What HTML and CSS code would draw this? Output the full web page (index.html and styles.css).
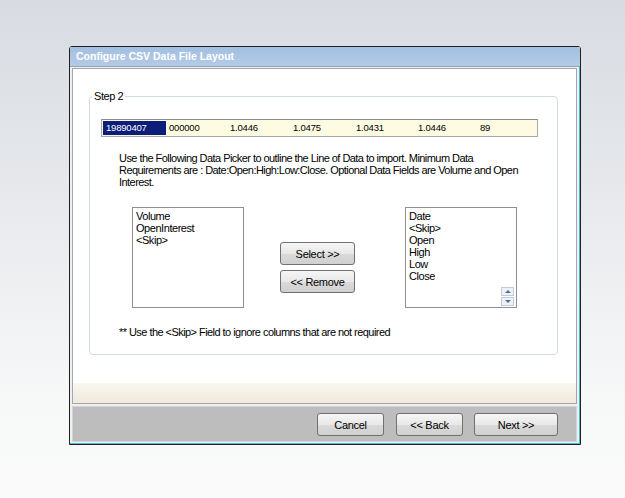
FILE: index.html
```html
<!DOCTYPE html>
<html lang="en">

<head>
  <meta charset="UTF-8">
  <meta name="viewport" content="width=device-width, initial-scale=1.0">
  <title>Configure CSV Data File Layout</title>
  <link rel="stylesheet" href="styles.css">
</head>

<body>
  <div class="window">
    <div class="titlebar">Configure CSV Data File Layout</div>
    <div class="frame">
      <div class="panel">
        <fieldset class="step">
          <legend>Step 2</legend>
          <div class="data-row">
            <span class="cell selected">19890407</span>
            <span class="cell">000000</span>
            <span class="cell">1.0446</span>
            <span class="cell">1.0475</span>
            <span class="cell">1.0431</span>
            <span class="cell">1.0446</span>
            <span class="cell">89</span>
          </div>
          <p class="intro">
            Use the Following Data Picker to outline the Line of Data to import. Minimum Data<br>
            Requirements are : Date:Open:High:Low:Close. Optional Data Fields are Volume and Open<br>
            Interest.
          </p>
          <div class="picker">
            <ul class="listbox">
              <li>Volume</li>
              <li>OpenInterest</li>
              <li>&lt;Skip&gt;</li>
            </ul>
            <div class="picker-buttons">
              <button class="btn">Select &gt;&gt;</button>
              <button class="btn">&lt;&lt; Remove</button>
            </div>
            <div class="listbox chosen">
              <ul>
                <li>Date</li>
                <li>&lt;Skip&gt;</li>
                <li>Open</li>
                <li>High</li>
                <li>Low</li>
                <li>Close</li>
              </ul>
              <div class="spin">
                <span class="spin-btn up"></span>
                <span class="spin-btn down"></span>
              </div>
            </div>
          </div>
          <p class="note">** Use the &lt;Skip&gt; Field to ignore columns that are not required</p>
        </fieldset>
        <div class="strip"></div>
      </div>
      <div class="footer">
        <button class="btn cancel">Cancel</button>
        <button class="btn back">&lt;&lt; Back</button>
        <button class="btn next">Next &gt;&gt;</button>
      </div>
    </div>
  </div>
</body>

</html>
```

FILE: styles.css
```css
body {
  margin: 0;
  height: 498px;
  overflow: hidden;
  font-family: "Liberation Sans", Arial, sans-serif;
  font-size: 11px;
  letter-spacing: -0.45px;
  color: #000;
  background: linear-gradient(to bottom, #d8dbe1 0%, #e9ebee 45%, #f7f8f8 80%, #fafafa 100%);
}

.window {
  box-sizing: border-box;
  width: 512px;
  height: 399px;
  margin: 46px 0 0 69px;
  border: 1px solid #202020;
  border-radius: 3px 3px 0 0;
  background: #eeeff1;
}

.titlebar {
  height: 19px;
  line-height: 19px;
  padding-left: 6px;
  border-bottom: 1px solid #9aa4ae;
  background: linear-gradient(to bottom, #a2bfe2, #b4cbe6);
  color: #fff;
  font-weight: bold;
  font-size: 10.5px;
  letter-spacing: 0;
}

.frame {
  padding: 1px 2px 1px 2px;
  border-right: 1px solid #3fc3d4;
  border-bottom: 1px solid #3fc3d4;
}

/* white content area */
.panel {
  box-sizing: border-box;
  height: 336px;
  display: flex;
  flex-direction: column;
  border: 1px solid #a6a6ae;
  background: #fff;
}

.step {
  box-sizing: border-box;
  width: 469px;
  margin: 21px 0 0 16px;
  padding: 0 0 16px 0;
  border: 1px solid #d3dae2;
  border-radius: 4px;
}

.step legend {
  margin-left: 2px;
  padding: 0 2px;
  line-height: 13px;
}

.data-row {
  box-sizing: border-box;
  display: grid;
  grid-template-columns: 63px 61px 63px 63px 62px 62px 1fr;
  width: 437px;
  height: 18px;
  margin: 16px 0 0 11px;
  padding: 1px;
  border: 1px solid #a8a8a8;
  border-top-color: #8c8c8c;
  background: #fdfce3;
  font-size: 9.5px;
  line-height: 14px;
  letter-spacing: -0.2px;
}

.cell {
  padding-left: 3px;
}

.cell.selected {
  background: #0c1d7a;
  color: #fff;
}

.intro {
  margin: 15px 0 0 29px;
  line-height: 12px;
  white-space: nowrap;
  letter-spacing: -0.55px;
}

.picker {
  display: flex;
  align-items: flex-start;
  margin: 19px 0 0 42px;
}

.listbox {
  box-sizing: border-box;
  width: 112px;
  height: 101px;
  margin: 0;
  padding: 2px 3px;
  list-style: none;
  border: 1px solid #8b8f96;
  line-height: 12px;
}

.listbox ul {
  margin: 0;
  padding: 0;
  list-style: none;
}

.picker-buttons {
  display: flex;
  flex-direction: column;
  gap: 5px;
  margin: 35px 0 0 36px;
}

.chosen {
  position: relative;
  margin-left: 50px;
}

.spin {
  position: absolute;
  right: 2px;
  bottom: 1px;
  display: flex;
  flex-direction: column;
  gap: 1px;
}

.spin-btn {
  box-sizing: border-box;
  width: 13px;
  height: 9px;
  border: 1px solid #c3cbd6;
  background: #eef1f6;
  position: relative;
}

.spin-btn::after {
  content: "";
  position: absolute;
  left: 3px;
  top: 2px;
  border-left: 3px solid transparent;
  border-right: 3px solid transparent;
}

.spin-btn.up::after {
  border-bottom: 3px solid #4b6fa8;
}

.spin-btn.down::after {
  top: 2px;
  border-top: 3px solid #4b6fa8;
}

.note {
  margin: 18px 0 0 29px;
  line-height: 12px;
  letter-spacing: -0.55px;
}

.strip {
  height: 20px;
  margin-top: auto;
  background: linear-gradient(to bottom, #f9f7ef, #efeadb);
}

.btn {
  box-sizing: border-box;
  width: 75px;
  height: 23px;
  padding: 0;
  border: 1px solid #707070;
  border-radius: 3px;
  background: linear-gradient(to bottom, #f6f6f6 0%, #e8e8e8 50%, #dadada 51%, #d0d0d0 100%);
  font-family: inherit;
  font-size: 11px;
  letter-spacing: -0.3px;
  color: #000;
}

.footer {
  box-sizing: border-box;
  height: 36px;
  margin-top: 2px;
  display: flex;
  justify-content: flex-end;
  gap: 12px;
  padding: 6px 18px 0 0;
  border: 1px solid #d4d4d4;
  background: #bdbdbd;
}

.footer .cancel,
.footer .back {
  width: 67px;
}

.footer .back {
  margin-right: -1px;
}

.footer .next {
  width: 84px;
}
```
